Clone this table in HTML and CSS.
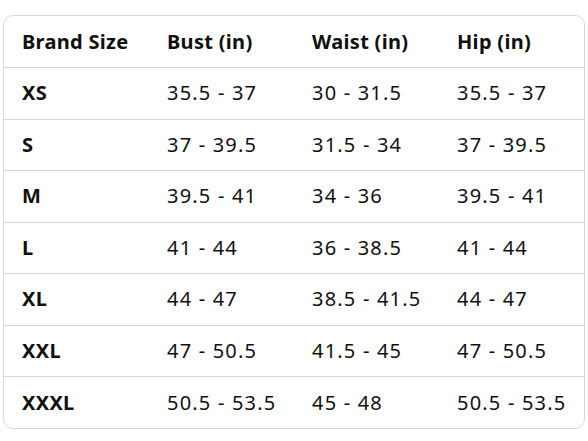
FILE: index.html
```html
<!DOCTYPE html>
<html>
<head>
<meta charset="utf-8">
<link rel="stylesheet" href="styles.css">
</head>
<body>
<div class="card">
  <table class="chart">
    <thead>
      <tr><th>Brand Size</th><th>Bust (in)</th><th>Waist (in)</th><th>Hip (in)</th></tr>
    </thead>
    <tbody>
      <tr><th>XS</th><td>35.5 - 37</td><td>30 - 31.5</td><td>35.5 - 37</td></tr>
      <tr><th>S</th><td>37 - 39.5</td><td>31.5 - 34</td><td>37 - 39.5</td></tr>
      <tr><th>M</th><td>39.5 - 41</td><td>34 - 36</td><td>39.5 - 41</td></tr>
      <tr><th>L</th><td>41 - 44</td><td>36 - 38.5</td><td>41 - 44</td></tr>
      <tr><th>XL</th><td>44 - 47</td><td>38.5 - 41.5</td><td>44 - 47</td></tr>
      <tr><th>XXL</th><td>47 - 50.5</td><td>41.5 - 45</td><td>47 - 50.5</td></tr>
      <tr><th>XXXL</th><td>50.5 - 53.5</td><td>45 - 48</td><td>50.5 - 53.5</td></tr>
    </tbody>
  </table>
</div>
</body>
</html>
```
FILE: styles.css
```css
html, body {
  margin: 0;
  padding: 0;
  background: #ffffff;
}
body {
  padding: 15px 3px 0 3px;
  font-family: "Noto Sans", "Open Sans", sans-serif;
  color: #0f1111;
}
.card {
  width: 582px;
  box-sizing: border-box;
  border: 1px solid #d5d9d9;
  border-radius: 10px;
  overflow: hidden;
}
.chart {
  width: 100%;
  border-collapse: collapse;
  table-layout: fixed;
}
.chart th, .chart td {
  height: 51.5px;
  padding: 0 0 0 18px;
  text-align: left;
  font-size: 20px;
  line-height: 26px;
  vertical-align: middle;
  box-sizing: border-box;
}
.chart th {
  font-weight: 700;
  letter-spacing: 0.3px;
}
.chart td {
  font-weight: 400;
  letter-spacing: 1.2px;
}
.chart tbody tr th,
.chart tbody tr td {
  border-top: 1px solid #d5d9d9;
}
```
